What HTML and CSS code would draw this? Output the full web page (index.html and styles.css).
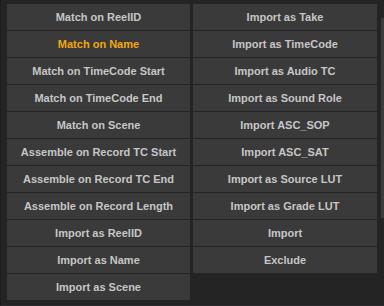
FILE: index.html
```html
<!DOCTYPE html>
<html>
<head>
<meta charset="utf-8">
<link rel="stylesheet" href="styles.css">
</head>
<body>
<div class="panel">
  <div class="grid">
    <div class="btn">Match on ReelID</div>
    <div class="btn">Import as Take</div>
    <div class="btn active">Match on Name</div>
    <div class="btn">Import as TimeCode</div>
    <div class="btn">Match on TimeCode Start</div>
    <div class="btn">Import as Audio TC</div>
    <div class="btn">Match on TimeCode End</div>
    <div class="btn">Import as Sound Role</div>
    <div class="btn">Match on Scene</div>
    <div class="btn">Import ASC_SOP</div>
    <div class="btn">Assemble on Record TC Start</div>
    <div class="btn">Import ASC_SAT</div>
    <div class="btn">Assemble on Record TC End</div>
    <div class="btn">Import as Source LUT</div>
    <div class="btn">Assemble on Record Length</div>
    <div class="btn">Import as Grade LUT</div>
    <div class="btn">Import as ReelID</div>
    <div class="btn">Import</div>
    <div class="btn">Import as Name</div>
    <div class="btn">Exclude</div>
    <div class="btn">Import as Scene</div>
  </div>
  <div class="scroll"></div>
</div>
</body>
</html>
```
FILE: styles.css
```css
html, body {
  margin: 0;
  padding: 0;
  background: #242424;
  width: 384px;
  height: 306px;
  overflow: hidden;
}
.panel {
  display: flex;
  height: 306px;
  box-sizing: border-box;
  padding: 4px 0 0 6px;
  border-left: 1px solid #1c1c1c;
  border-bottom: 1px solid #2e3033;
}
.grid {
  display: grid;
  grid-template-columns: 183px 184px;
  grid-auto-rows: 26px;
  column-gap: 3px;
  row-gap: 1px;
  align-content: start;
}
.btn {
  background: #3a3a3a;
  color: #c6c6c6;
  font-family: "Liberation Sans", Arial, sans-serif;
  font-weight: bold;
  font-size: 11px;
  display: flex;
  align-items: center;
  justify-content: center;
  white-space: nowrap;
}
.btn.active {
  color: #f2a70b;
}
.scroll {
  margin-left: auto;
  width: 3px;
  margin-top: 14px;
  height: 200px;
  background: #3c3c3c;
}
```
